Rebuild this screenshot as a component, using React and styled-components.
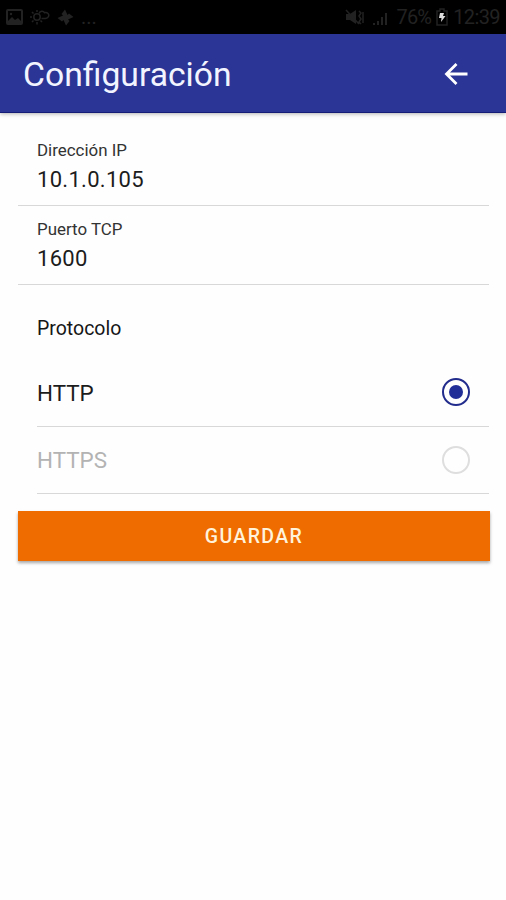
import React, { useState } from "react";
import styled, { createGlobalStyle, css } from "styled-components";

const GlobalStyle = createGlobalStyle`
  body {
    margin: 0;
    background-color: #fefefe;
    font-family: Roboto, sans-serif;
    color: #161616;
  }
`;

const Screen = styled.div`
  width: 100%;
  max-width: 506px;
  height: 900px;
  overflow: hidden;
`;

// Status bar

const StatusBar = styled.div`
  box-sizing: border-box;
  height: 34px;
  padding: 0 6px;
  display: flex;
  align-items: center;
  justify-content: space-between;
  background-color: #000;
  color: #222;
`;

const StatusGroup = styled.div`
  display: flex;
  align-items: center;
  gap: ${props => props.gap}px;
`;

const StatusIcon = styled.svg`
  display: block;
  flex: none;
`;

const StatusText = styled.span`
  font-size: 20px;
  line-height: 34px;
  letter-spacing: ${props => props.spacing || 0}px;
`;

// Header

const Header = styled.header`
  box-sizing: border-box;
  height: 79px;
  padding: 0 37px 0 23px;
  display: flex;
  align-items: center;
  justify-content: space-between;
  background-color: #2b3595;
  border-bottom: 1px solid #151c78;
  box-shadow: 0 1px 4px rgba(0, 0, 0, 0.3);
`;

const Title = styled.h1`
  margin: 0;
  padding-top: 4px;
  font-size: 33.7px;
  font-weight: 400;
  line-height: 74px;
  color: #f2f5ff;
`;

const BackButton = styled.button`
  padding: 1px 0 0;
  border: 0;
  background: none;
  color: #fff;
`;

// Form

const Form = styled.form`
  padding: 14px 16px 0 18px;
`;

const Field = styled.label`
  box-sizing: border-box;
  display: block;
  height: 79px;
  padding: 13px 0 0 19px;
  margin-right: 1px;
  border-bottom: 1px solid #d8d8d8;
`;

const FieldLabel = styled.span`
  display: block;
  font-size: 16.9px;
  line-height: 20px;
  color: #333;
`;

const FieldInput = styled.input`
  display: block;
  width: 100%;
  height: 30px;
  margin-top: 4px;
  padding: 0;
  border: 0;
  outline: 0;
  background: none;
  font-family: inherit;
  font-size: 22px;
  letter-spacing: 0.3px;
  color: #1c1c1c;
`;

const ListHeader = styled.div`
  height: 74px;
  padding-left: 19px;
  font-size: 19.5px;
  line-height: 87px;
`;

const Option = styled.div`
  box-sizing: border-box;
  height: ${props => props.height}px;
  margin: 0 1px 0 19px;
  padding-right: 19px;
  display: flex;
  align-items: center;
  justify-content: space-between;
  border-bottom: 1px solid #d8d8d8;
  font-size: 22.4px;
  color: #1c1c1c;
  ${props =>
    props.dimmed &&
    css`
      color: #b3b3b3;
    `};
`;

const Radio = styled.span`
  box-sizing: border-box;
  width: 28px;
  height: 28px;
  margin-bottom: 1px;
  display: flex;
  align-items: center;
  justify-content: center;
  border: 2px solid ${props => (props.checked ? "#222c8c" : "#dedede")};
  border-radius: 50%;
`;

const RadioDot = styled.span`
  width: 14px;
  height: 14px;
  border-radius: 50%;
  background-color: #222e98;
`;

const SaveButton = styled.button`
  display: block;
  width: 100%;
  height: 50px;
  margin-top: 17px;
  padding: 0;
  border: 0;
  background-color: #ee6c00;
  box-shadow: 0 2px 3px rgba(0, 0, 0, 0.35);
  font-family: inherit;
  font-size: 19.5px;
  font-weight: 500;
  letter-spacing: 1.4px;
  color: #fff3dc;
`;

function StatusIcons() {
  return (
    <StatusBar>
      <StatusGroup gap={7}>
        <StatusIcon width="17" height="16" viewBox="0 0 17 16">
          <rect x="1" y="1" width="15" height="14" rx="1" fill="none" stroke="currentColor" strokeWidth="2" />
          <path d="M2 12l4-4 3 3 3-2 3 3v2H2z" fill="currentColor" />
          <circle cx="5" cy="5" r="1.2" fill="currentColor" />
        </StatusIcon>
        <StatusIcon width="20" height="18" viewBox="0 0 20 18" fill="none" stroke="currentColor" strokeWidth="1.5">
          <circle cx="7" cy="9" r="3.2" />
          <path d="M7 2v2M7 14v2.5M0 9h2M2 4l1.5 1.5M2 14l1.5-1.5M12 14l-1.5-1.5" />
          <path d="M9 5.5c1-3 4.5-3 5.500-.8 3-.7 5 1.5 4 3.8-.8 2-3 2.3-7 2" />
        </StatusIcon>
        <StatusIcon width="17" height="17" viewBox="0 0 17 17" fill="currentColor">
          <path d="M8.5 9L4.500 5 8 0.5 10.500 6zM8 8.5L12 4.500 16.500 8 11 10.500zM8.5 8L12.500 12 9 16.500 6.500 11zM9 8.5L5 12.500 0.500 9 6 6.500z" />
        </StatusIcon>
        <StatusText>...</StatusText>
      </StatusGroup>
      <StatusGroup gap={5}>
        <StatusIcon width="20" height="17" viewBox="0 0 20 17">
          <path d="M1 5h4l6-4v14l-6-4H1z" fill="currentColor" />
          <path d="M1 1l13 14M14 2l2 2-2 3 2 3-2 3 2 2M18 3v11" fill="none" stroke="currentColor" strokeWidth="1.5" />
        </StatusIcon>
        <StatusIcon width="21" height="17" viewBox="0 0 21 17" fill="currentColor">
          <path d="M3 14h2v2H3zM7 12h2v4H7zM11 8h2v8h-2zM15 4h2v12h-2z" />
        </StatusIcon>
        <StatusText spacing={-0.8}>76%</StatusText>
        <StatusIcon width="12" height="18" viewBox="0 0 12 18">
          <path d="M4 1h4v2h3v14H1V3h3z" fill="none" stroke="currentColor" strokeWidth="1.5" />
          <path d="M4 5h4l-1 3h2.5L5 14l.5-4H3z" fill="#ddd" />
        </StatusIcon>
        <StatusText spacing={-0.6}>12:39</StatusText>
      </StatusGroup>
    </StatusBar>
  );
}

const protocols = [
  { name: "HTTP", height: 68 },
  { name: "HTTPS", height: 67 }
];

export default function App() {
  const [ip, setIp] = useState("10.1.0.105");
  const [port, setPort] = useState("1600");
  const [protocol, setProtocol] = useState("HTTP");

  return (
    <Screen>
      <GlobalStyle />
      <StatusIcons />
      <Header>
        <Title>Configuración</Title>
        <BackButton aria-label="Volver">
          <StatusIcon width="26" height="26" viewBox="0 0 26 26" fill="none" stroke="currentColor" strokeWidth="2.8">
            <path d="M13.5 3L3.5 13l10 10M3.5 13H24.5" />
          </StatusIcon>
        </BackButton>
      </Header>
      <Form onSubmit={e => e.preventDefault()}>
        <Field>
          <FieldLabel>Dirección IP</FieldLabel>
          <FieldInput value={ip} onChange={e => setIp(e.target.value)} />
        </Field>
        <Field>
          <FieldLabel>Puerto TCP</FieldLabel>
          <FieldInput value={port} onChange={e => setPort(e.target.value)} />
        </Field>
        <ListHeader>Protocolo</ListHeader>
        {protocols.map(({ name, height }) => (
          <Option
            key={name}
            height={height}
            dimmed={name !== protocol}
            onClick={() => setProtocol(name)}
          >
            {name}
            <Radio checked={name === protocol}>
              {name === protocol && <RadioDot />}
            </Radio>
          </Option>
        ))}
        <SaveButton>GUARDAR</SaveButton>
      </Form>
    </Screen>
  );
}
